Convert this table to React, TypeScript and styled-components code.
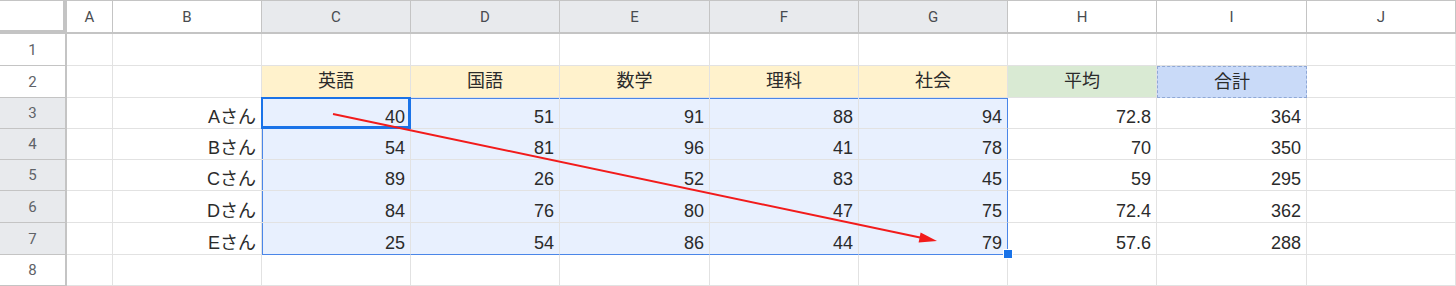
import { createGlobalStyle, css, styled } from "styled-components";

const COLS = ["A", "B", "C", "D", "E", "F", "G", "H", "I", "J"];
const COL_WIDTHS = [67, 46, 149, 149, 149, 150, 149, 149, 149, 150, 149];
const ROW_HEIGHTS = [34, 32, 32, 31, 31, 31, 32, 32, 31];

const subjects = ["英語", "国語", "数学", "理科", "社会"];

const people = [
  { name: "Aさん", scores: [40, 51, 91, 88, 94], avg: "72.8", total: "364" },
  { name: "Bさん", scores: [54, 81, 96, 41, 78], avg: "70", total: "350" },
  { name: "Cさん", scores: [89, 26, 52, 83, 45], avg: "59", total: "295" },
  { name: "Dさん", scores: [84, 76, 80, 47, 75], avg: "72.4", total: "362" },
  { name: "Eさん", scores: [25, 54, 86, 44, 79], avg: "57.6", total: "288" },
];

// selection C3:G7 (col index 2..6, row 3..7)
const SEL = { c1: 2, c2: 6, r1: 3, r2: 7 };

type Align = "left" | "center" | "right";

type CellInfo = {
  text?: string;
  align?: Align;
  fill?: string;
  marquee?: boolean;
};

function cellAt(row: number, col: number): CellInfo {
  if (row === 2) {
    if (col >= 2 && col <= 6) return { text: subjects[col - 2], align: "center", fill: "#fff2cc" };
    if (col === 7) return { text: "平均", align: "center", fill: "#d9ead3" };
    if (col === 8) return { text: "合計", align: "center", fill: "#c9daf8", marquee: true };
    return {};
  }
  const p = people[row - 3];
  if (!p) return {};
  if (col === 1) return { text: p.name, align: "right" };
  if (col >= 2 && col <= 6) return { text: String(p.scores[col - 2]), align: "right" };
  if (col === 7) return { text: p.avg, align: "right" };
  if (col === 8) return { text: p.total, align: "right" };
  return {};
}

export default function App() {
  const rows = [1, 2, 3, 4, 5, 6, 7, 8];

  return (
    <>
      <GlobalStyle />
      <Frame>
        <Sheet
          $cols={COL_WIDTHS.map((w) => `${w}px`).join(" ")}
          $rows={ROW_HEIGHTS.map((h) => `${h}px`).join(" ")}
        >
          <Corner />
          {COLS.map((c, i) => (
            <ColHeader key={c} $selected={i >= SEL.c1 && i <= SEL.c2}>
              {c}
            </ColHeader>
          ))}

          {rows.map((r) => {
            const rowSel = r >= SEL.r1 && r <= SEL.r2;
            return [
              <RowHeader key={`h${r}`} $selected={rowSel}>
                {r}
              </RowHeader>,
              ...COLS.map((_, c) => {
                const info = cellAt(r, c);
                const inSel = rowSel && c >= SEL.c1 && c <= SEL.c2;
                return (
                  <Cell
                    key={`${r}-${c}`}
                    $align={info.align ?? "left"}
                    $fill={inSel ? "#e8f0fe" : info.fill}
                    $marquee={info.marquee}
                    $selTop={inSel && r === SEL.r1}
                    $selLeft={inSel && c === SEL.c1}
                    $selRight={inSel && c === SEL.c2}
                    $selBottom={inSel && r === SEL.r2}
                    $active={r === SEL.r1 && c === SEL.c1}
                    $handle={r === SEL.r2 && c === SEL.c2}
                  >
                    {info.text}
                  </Cell>
                );
              }),
            ];
          })}
        </Sheet>

        <ArrowLayer width="1456" height="286" viewBox="0 0 1456 286">
          <line x1="333" y1="114" x2="920" y2="237.5" stroke="#f21b1b" strokeWidth="2" />
          <polygon points="937,241 918.6,242.4 920.6,232.4" fill="#f21b1b" />
        </ArrowLayer>
      </Frame>
    </>
  );
}

const GlobalStyle = createGlobalStyle`
  html, body {
    margin: 0;
    padding: 0;
    background: #fff;
    overflow: hidden;
  }
  body {
    font-family: "Liberation Sans", "Noto Sans CJK JP", Arial, sans-serif;
  }
  * {
    box-sizing: border-box;
  }
`;

const Frame = styled.div`
  position: relative;
  width: 1456px;
  height: 286px;
  overflow: hidden;
`;

const Sheet = styled.div<{ $cols: string; $rows: string }>`
  display: grid;
  grid-template-columns: ${(p) => p.$cols};
  grid-template-rows: ${(p) => p.$rows};
`;

const Corner = styled.div`
  background: #fff;
  border-top: 1px solid #c4c4c4;
  border-right: 4px solid #c4c4c4;
  border-bottom: 4px solid #c4c4c4;
`;

const ColHeader = styled.div<{ $selected: boolean }>`
  display: flex;
  align-items: center;
  justify-content: center;
  border-top: 1px solid #c4c4c4;
  border-right: 1px solid #c4c4c4;
  border-bottom: 2px solid #c4c4c4;
  background: ${(p) => (p.$selected ? "#e8eaed" : "#fff")};
  color: #494c50;
  font-family: Roboto, "Liberation Sans", sans-serif;
  font-size: 15px;
  padding-top: 1px;
`;

const RowHeader = styled.div<{ $selected: boolean }>`
  display: flex;
  align-items: center;
  justify-content: center;
  border-right: 2px solid #c4c4c4;
  border-bottom: 1px solid #c4c4c4;
  background: ${(p) => (p.$selected ? "#e8eaed" : "#fff")};
  color: #5f6368;
  font-family: Roboto, "Liberation Sans", sans-serif;
  font-size: 15px;
`;

const SEL_BLUE = "#4a86e8";
const ACTIVE_BLUE = "#1a73e8";

const Cell = styled.div<{
  $align: Align;
  $fill?: string;
  $marquee?: boolean;
  $selTop: boolean;
  $selLeft: boolean;
  $selRight: boolean;
  $selBottom: boolean;
  $active: boolean;
  $handle: boolean;
}>`
  position: relative;
  display: flex;
  align-items: ${(p) => (p.$align === "center" ? "center" : "flex-end")};
  justify-content: ${(p) =>
    p.$align === "right" ? "flex-end" : p.$align === "center" ? "center" : "flex-start"};
  padding: 0 5px 1px;
  border-right: 1px solid ${(p) => (p.$selRight ? SEL_BLUE : "#e2e2e2")};
  border-bottom: 1px solid ${(p) => (p.$selBottom ? SEL_BLUE : "#e2e2e2")};
  background: ${(p) => p.$fill ?? "#fff"};
  color: #2b2b2b;
  font-size: 18px;
  line-height: 20px;
  white-space: nowrap;

  ${(p) =>
    (p.$selTop || p.$selLeft) &&
    css`
      box-shadow: ${[
        p.$selTop ? `inset 0 1px 0 ${SEL_BLUE}` : "",
        p.$selLeft ? `inset 1px 0 0 ${SEL_BLUE}` : "",
      ]
        .filter(Boolean)
        .join(", ")};
    `}

  ${(p) =>
    p.$active &&
    css`
      border-right-color: ${ACTIVE_BLUE};
      border-bottom-color: ${ACTIVE_BLUE};
      box-shadow: inset 0 0 0 2px ${ACTIVE_BLUE};
      margin: -1px 0 0 -1px;
    `}

  ${(p) =>
    p.$marquee &&
    css`
      border: 1px dashed #8fa8d6;
    `}

  ${(p) =>
    p.$handle &&
    css`
      &::after {
        content: "";
        position: absolute;
        z-index: 2;
        right: -5px;
        bottom: -4px;
        width: 8px;
        height: 8px;
        background: ${ACTIVE_BLUE};
        box-shadow: 0 0 0 1px #fff;
      }
    `}
`;

const ArrowLayer = styled.svg`
  position: absolute;
  left: 0;
  top: 0;
  pointer-events: none;
`;
